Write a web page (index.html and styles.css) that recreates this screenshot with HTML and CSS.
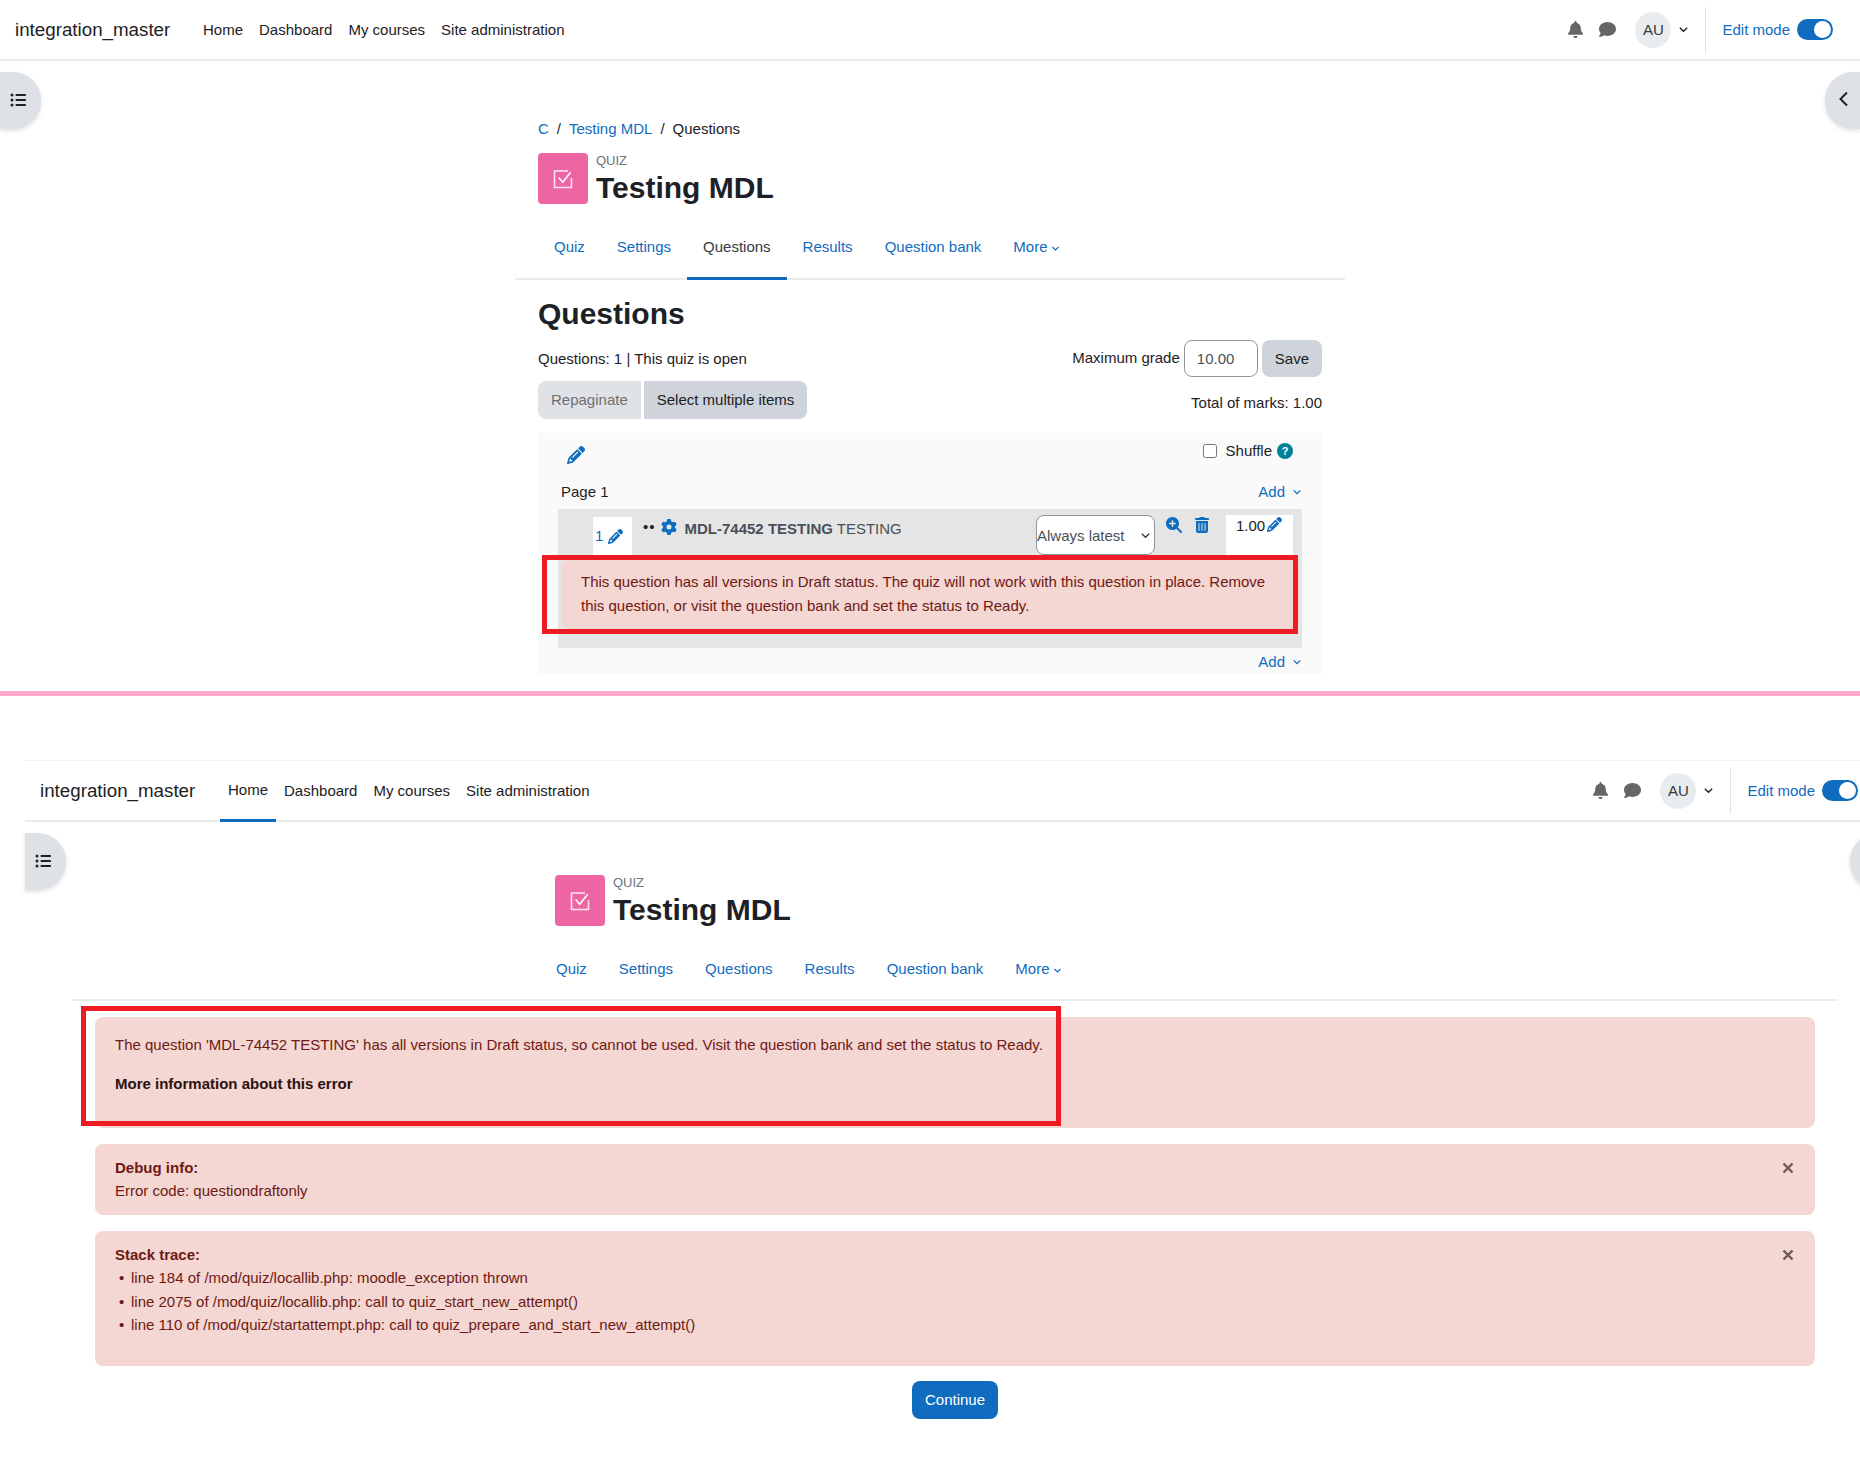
FILE: index.html
```html
<!DOCTYPE html>
<html lang="en">
<head>
  <meta charset="UTF-8" />
  <title>Testing MDL</title>
  <link rel="stylesheet" href="styles.css">
</head>
<body>
  <svg class="sprite" xmlns="http://www.w3.org/2000/svg">
    <symbol id="i-bell" viewBox="0 0 448 512"><path d="M224 0c-17.7 0-32 14.3-32 32V51.2C119 66 64 130.6 64 208v18.8c0 47-17.3 92.4-48.5 127.6l-7.4 8.3c-8.4 9.4-10.4 22.9-5.3 34.4S19.4 416 32 416H416c12.6 0 24-7.4 29.2-18.9s3.1-25-5.3-34.4l-7.4-8.3C401.3 319.2 384 273.9 384 226.8V208c0-77.4-55-142-128-156.8V32c0-17.7-14.3-32-32-32zm45.3 493.3c12-12 18.7-28.3 18.7-45.3H224 160c0 17 6.7 33.3 18.7 45.3s28.3 18.7 45.3 18.7s33.3-6.7 45.3-18.7z"/></symbol>
    <symbol id="i-comment" viewBox="0 0 512 512"><path d="M512 240c0 114.9-114.6 208-256 208c-37.1 0-72.3-6.4-104.1-17.9c-11.9 8.7-31.3 20.6-54.3 30.6C73.6 471.1 44.7 480 16 480c-6.5 0-12.3-3.9-14.8-9.9c-2.5-6-1.1-12.8 3.4-17.4l.3-.3c.3-.3 .7-.7 1.3-1.4c1.1-1.2 2.8-3.1 4.9-5.7c4.1-5 9.6-12.4 15.2-21.6c10-16.6 19.5-38.4 21.4-62.9C17.7 326.8 0 285.1 0 240C0 125.1 114.6 32 256 32s256 93.1 256 208z"/></symbol>
    <symbol id="i-pen" viewBox="0 0 512 512"><path d="M410.3 231l11.3-11.3-33.9-33.9-62.1-62.1L291.7 89.8l-11.3 11.3-22.6 22.6L58.6 322.9c-10.4 10.4-18 23.3-22.2 37.4L1 480.7c-2.5 8.4-.2 17.5 6.1 23.7s15.3 8.5 23.7 6.1l120.3-35.4c14.1-4.2 27-11.8 37.4-22.2L387.7 253.7 410.3 231zM160 399.4l-9.1 22.7c-4 3.1-8.5 5.4-13.3 6.9L59.4 452l23-78.1c1.4-4.9 3.8-9.4 6.9-13.3l22.7-9.1v32c0 8.8 7.2 16 16 16h32zM362.7 18.7L348.3 33.2 325.7 55.8 314.3 67.1l33.9 33.9 62.1 62.1 33.9 33.9 11.3-11.3 22.6-22.6 14.5-14.5c25-25 25-65.5 0-90.5L453.3 18.7c-25-25-65.5-25-90.5 0zm-47.4 168l-144 144c-6.2 6.2-16.4 6.2-22.6 0s-6.2-16.4 0-22.6l144-144c6.2-6.2 16.4-6.2 22.6 0s6.2 16.4 0 22.6z"/></symbol>
    <symbol id="i-gear" viewBox="0 0 512 512"><path d="M495.9 166.6c3.2 8.7 .5 18.4-6.4 24.6l-43.3 39.4c1.1 8.3 1.7 16.8 1.7 25.4s-.6 17.1-1.7 25.4l43.3 39.4c6.9 6.2 9.6 15.9 6.4 24.6c-4.4 11.9-9.7 23.3-15.8 34.3l-4.7 8.1c-6.6 11-14 21.4-22.1 31.2c-5.9 7.2-15.7 9.6-24.5 6.8l-55.7-17.7c-13.4 10.3-28.2 18.9-44 25.4l-12.5 57.1c-2 9.1-9 16.3-18.2 17.8c-13.8 2.3-28 3.5-42.5 3.5s-28.7-1.2-42.5-3.5c-9.2-1.5-16.2-8.7-18.2-17.8l-12.5-57.1c-15.8-6.5-30.6-15.1-44-25.4L83.1 425.9c-8.8 2.8-18.6 .3-24.5-6.8c-8.1-9.8-15.5-20.2-22.1-31.2l-4.7-8.1c-6.1-11-11.4-22.4-15.8-34.3c-3.2-8.7-.5-18.4 6.4-24.6l43.3-39.4C64.6 273.1 64 264.6 64 256s.6-17.1 1.7-25.4L22.4 191.2c-6.9-6.2-9.6-15.9-6.4-24.6c4.4-11.9 9.7-23.3 15.8-34.3l4.7-8.1c6.6-11 14-21.4 22.1-31.2c5.9-7.2 15.7-9.6 24.5-6.8l55.7 17.7c13.4-10.3 28.2-18.9 44-25.4l12.5-57.1c2-9.1 9-16.3 18.2-17.8C227.3 1.2 241.5 0 256 0s28.7 1.2 42.5 3.5c9.2 1.5 16.2 8.7 18.2 17.8l12.5 57.1c15.8 6.5 30.6 15.1 44 25.4l55.7-17.7c8.8-2.8 18.6-.3 24.5 6.8c8.1 9.8 15.5 20.2 22.1 31.2l4.7 8.1c6.1 11 11.4 22.4 15.8 34.3zM256 336a80 80 0 1 0 0-160 80 80 0 1 0 0 160z"/></symbol>
    <symbol id="i-zoom" viewBox="0 0 512 512"><path d="M416 208c0 45.9-14.9 88.3-40 122.7L502.6 457.4c12.5 12.5 12.5 32.8 0 45.3s-32.8 12.5-45.3 0L330.7 376c-34.4 25.2-76.8 40-122.7 40C93.1 416 0 322.9 0 208S93.1 0 208 0S416 93.1 416 208zM184 296c0 13.3 10.7 24 24 24s24-10.7 24-24V232h64c13.3 0 24-10.7 24-24s-10.7-24-24-24H232V120c0-13.3-10.7-24-24-24s-24 10.7-24 24v64H120c-13.3 0-24 10.7-24 24s10.7 24 24 24h64v64z"/></symbol>
    <symbol id="i-trash" viewBox="0 0 448 512"><path d="M135.2 17.7C140.6 6.8 151.7 0 163.8 0H284.2c12.1 0 23.2 6.8 28.6 17.7L320 32h96c17.7 0 32 14.3 32 32s-14.3 32-32 32H32C14.3 96 0 81.7 0 64S14.3 32 32 32h96l7.2-14.3zM32 128H416V448c0 35.3-28.7 64-64 64H96c-35.3 0-64-28.7-64-64V128zm96 64c-8.8 0-16 7.2-16 16V432c0 8.8 7.2 16 16 16s16-7.2 16-16V208c0-8.8-7.2-16-16-16zm96 0c-8.8 0-16 7.2-16 16V432c0 8.8 7.2 16 16 16s16-7.2 16-16V208c0-8.8-7.2-16-16-16zm96 0c-8.8 0-16 7.2-16 16V432c0 8.8 7.2 16 16 16s16-7.2 16-16V208c0-8.8-7.2-16-16-16z"/></symbol>
    <symbol id="i-list" viewBox="0 0 16 16"><circle cx="2" cy="3" r="1.5"/><circle cx="2" cy="8" r="1.5"/><circle cx="2" cy="13" r="1.5"/><rect x="5.5" y="2" width="10.5" height="2" rx=".8"/><rect x="5.5" y="7" width="10.5" height="2" rx=".8"/><rect x="5.5" y="12" width="10.5" height="2" rx=".8"/></symbol>
    <symbol id="i-quiz" viewBox="0 0 24 24"><path d="M17 4H3.5v16.5h17V11" fill="none" stroke="currentColor" stroke-opacity=".85" stroke-width="1.5" stroke-linejoin="round"/><path d="M7.7 10.5l4 4.7 8-10" fill="none" stroke="currentColor" stroke-width="1.6"/></symbol>
    <symbol id="i-down" viewBox="0 0 12 12"><path d="M2 4l4 4 4-4" fill="none" stroke="currentColor" stroke-width="1.5"/></symbol>
    <symbol id="i-close" viewBox="0 0 12 12"><path d="M1.5 1.5l9 9M10.5 1.5l-9 9" fill="none" stroke="currentColor" stroke-width="2.4"/></symbol>
  </svg>

  <!-- first capture: quiz questions page -->
  <section class="frame frame-questions">
    <nav class="navbar">
      <a class="brand">integration_master</a>
      <ul class="nav-links">
        <li><a>Home</a></li>
        <li><a>Dashboard</a></li>
        <li><a>My courses</a></li>
        <li><a>Site administration</a></li>
      </ul>
      <div class="user-nav">
        <svg class="nav-icon bell"><use href="#i-bell"/></svg>
        <svg class="nav-icon comment"><use href="#i-comment"/></svg>
        <span class="avatar">AU</span>
        <svg class="caret"><use href="#i-down"/></svg>
        <span class="nav-divider"></span>
        <a class="edit-label">Edit mode</a>
        <span class="toggle"></span>
      </div>
    </nav>
    <button class="drawer-toggle drawer-left"><svg><use href="#i-list"/></svg></button>
    <button class="drawer-toggle drawer-right"><svg viewBox="0 0 12 16"><path d="M9 1.5L2.5 8 9 14.5" fill="none" stroke="currentColor" stroke-width="2"/></svg></button>

    <main class="quiz-main">
      <ol class="breadcrumb">
        <li><a>C</a></li>
        <li class="sep">/</li>
        <li><a>Testing MDL</a></li>
        <li class="sep">/</li>
        <li>Questions</li>
      </ol>
      <header class="page-head">
        <span class="quiz-icon"><svg><use href="#i-quiz"/></svg></span>
        <div>
          <div class="page-type">QUIZ</div>
          <h1>Testing MDL</h1>
        </div>
      </header>
      <ul class="tabs">
        <li><a>Quiz</a></li>
        <li><a>Settings</a></li>
        <li class="active"><a>Questions</a></li>
        <li><a>Results</a></li>
        <li><a>Question bank</a></li>
        <li><a>More <svg class="more-caret"><use href="#i-down"/></svg></a></li>
      </ul>

      <h2>Questions</h2>
      <div class="info-row">
        <span>Questions: 1 | This quiz is open</span>
        <form class="grade-form">
          <label for="maxgrade">Maximum grade</label>
          <input id="maxgrade" type="text" value="10.00" />
          <button type="button" class="btn btn-grey">Save</button>
        </form>
      </div>
      <div class="action-row">
        <div class="btn-pair">
          <button type="button" class="btn btn-grey is-disabled">Repaginate</button>
          <button type="button" class="btn btn-grey">Select multiple items</button>
        </div>
        <span class="total-marks">Total of marks: 1.00</span>
      </div>

      <div class="slots">
        <div class="slots-head">
          <svg class="pen pen-lg"><use href="#i-pen"/></svg>
          <label class="shuffle"><input type="checkbox" /> Shuffle <span class="help">?</span></label>
        </div>
        <div class="page-row">
          <span>Page 1</span>
          <a class="add-link">Add <svg><use href="#i-down"/></svg></a>
        </div>
        <div class="slot">
          <div class="slot-line">
            <span class="slot-num"><a>1</a><svg class="pen"><use href="#i-pen"/></svg></span>
            <span class="dots">••</span>
            <svg class="gear"><use href="#i-gear"/></svg>
            <span class="slot-title"><b>MDL-74452 TESTING</b> TESTING</span>
            <select class="version"><option>Always latest</option></select>
            <svg class="slot-icon zoom"><use href="#i-zoom"/></svg>
            <svg class="slot-icon trash"><use href="#i-trash"/></svg>
            <span class="slot-mark">1.00<svg class="pen"><use href="#i-pen"/></svg></span>
          </div>
          <div class="alert slot-alert">This question has all versions in Draft status. The quiz will not work with this question in place. Remove this question, or visit the question bank and set the status to Ready.</div>
          <span class="marker marker-slot"></span>
        </div>
        <div class="page-row page-row-end">
          <a class="add-link">Add <svg><use href="#i-down"/></svg></a>
        </div>
      </div>
    </main>
  </section>

  <div class="divider"></div>

  <!-- second capture: error page -->
  <section class="frame frame-error">
    <nav class="navbar">
      <a class="brand">integration_master</a>
      <ul class="nav-links">
        <li class="active"><a>Home</a></li>
        <li><a>Dashboard</a></li>
        <li><a>My courses</a></li>
        <li><a>Site administration</a></li>
      </ul>
      <div class="user-nav">
        <svg class="nav-icon bell"><use href="#i-bell"/></svg>
        <svg class="nav-icon comment"><use href="#i-comment"/></svg>
        <span class="avatar">AU</span>
        <svg class="caret"><use href="#i-down"/></svg>
        <span class="nav-divider"></span>
        <a class="edit-label">Edit mode</a>
        <span class="toggle"></span>
      </div>
    </nav>
    <button class="drawer-toggle drawer-left"><svg><use href="#i-list"/></svg></button>
    <button class="drawer-toggle drawer-right"></button>

    <main class="error-main">
      <header class="page-head">
        <span class="quiz-icon"><svg><use href="#i-quiz"/></svg></span>
        <div>
          <div class="page-type">QUIZ</div>
          <h1>Testing MDL</h1>
        </div>
      </header>
      <ul class="tabs">
        <li><a>Quiz</a></li>
        <li><a>Settings</a></li>
        <li><a>Questions</a></li>
        <li><a>Results</a></li>
        <li><a>Question bank</a></li>
        <li><a>More <svg class="more-caret"><use href="#i-down"/></svg></a></li>
      </ul>

      <div class="alerts">
        <div class="alert alert-main">
          <p>The question 'MDL-74452 TESTING' has all versions in Draft status, so cannot be used. Visit the question bank and set the status to Ready.</p>
          <a class="more-info">More information about this error</a>
          <span class="marker marker-error"></span>
        </div>
        <div class="alert alert-debug">
          <div>
            <b>Debug info:</b><br>
            Error code: questiondraftonly
          </div>
          <svg class="close"><use href="#i-close"/></svg>
        </div>
        <div class="alert alert-debug alert-stack">
          <div>
            <b>Stack trace:</b>
            <ul>
              <li>line 184 of /mod/quiz/locallib.php: moodle_exception thrown</li>
              <li>line 2075 of /mod/quiz/locallib.php: call to quiz_start_new_attempt()</li>
              <li>line 110 of /mod/quiz/startattempt.php: call to quiz_prepare_and_start_new_attempt()</li>
            </ul>
          </div>
          <svg class="close"><use href="#i-close"/></svg>
        </div>
      </div>
      <div class="continue-row"><button type="button" class="btn btn-primary">Continue</button></div>
    </main>
  </section>
</body>
</html>
```

FILE: styles.css
```css
* {
  margin: 0;
  padding: 0;
  box-sizing: border-box;
  font-family: "Liberation Sans", Arial, sans-serif;
}

html, body {
  width: 1860px;
  height: 1464px;
  overflow: hidden;
}

body {
  background: #fff;
  color: #1d2125;
  font-size: 15px;
  line-height: 22px;
}

a {
  color: #0f6cbf;
}

ul, ol {
  list-style: none;
}

.sprite {
  position: absolute;
  width: 0;
  height: 0;
}

svg {
  fill: currentColor;
  display: block;
}

.frame {
  position: relative;
  width: 1860px;
  overflow: hidden;
}

.frame-questions {
  height: 691px;
}

.frame-error {
  margin-top: 64px;
  margin-left: 25px;
  height: 704px;
  border-top: 1px solid #f2f3f5;
  overflow: visible;
}

.divider {
  height: 5px;
  background: #ffa8c9;
}

/* top bar */
.navbar {
  display: flex;
  align-items: center;
  height: 61px;
  padding-left: 15px;
  border-bottom: 2px solid #e9ecef;
}

.brand {
  width: 180px;
  font-size: 18.75px;
  color: #1d2125;
}

.nav-links {
  display: flex;
  align-self: stretch;
}

.nav-links li {
  display: flex;
  align-items: center;
  padding: 0 8px 1px;
  margin-bottom: -2px;
}

.nav-links a {
  color: #1d2125;
}

.nav-links .active {
  padding-bottom: 0;
  border-bottom: 3px solid #0f6cbf;
}

.user-nav {
  display: flex;
  align-items: center;
  margin-left: auto;
  padding-right: 27px;
  color: #1d2125;
}

.nav-icon {
  color: #666;
}

.bell {
  width: 15px;
  height: 17px;
}

.comment {
  width: 17px;
  height: 17px;
  margin-left: 16px;
}

.avatar {
  display: flex;
  align-items: center;
  justify-content: center;
  width: 36px;
  height: 36px;
  margin-left: 19px;
  border-radius: 50%;
  background: #e9ecef;
  color: #343a40;
}

.caret {
  width: 11px;
  height: 11px;
  margin-left: 7px;
}

.nav-divider {
  width: 1px;
  height: 46px;
  margin: 0 16px;
  background: #dee2e6;
}

.edit-label {
  margin-right: 7px;
}

.toggle {
  position: relative;
  width: 36px;
  height: 21px;
  border-radius: 11px;
  background: #0f6cbf;
}

.toggle::after {
  content: "";
  position: absolute;
  top: 2px;
  right: 2px;
  width: 17px;
  height: 17px;
  border-radius: 50%;
  background: #fff;
}

.drawer-toggle {
  position: absolute;
  top: 72px;
  width: 41px;
  height: 57px;
  border: none;
  background: #dee2e6;
  color: #1d2125;
  box-shadow: 0 2px 4px rgba(0, 0, 0, 0.12);
  display: flex;
  align-items: center;
}

.drawer-left {
  left: 0;
  border-radius: 0 28px 28px 0;
  padding-left: 10px;
}

.drawer-left svg {
  width: 16px;
  height: 16px;
  margin-top: -2px;
}

.drawer-right {
  right: 0;
  width: 35px;
  border-radius: 28px 0 0 28px;
  padding-left: 13px;
}

.drawer-right svg {
  width: 12px;
  height: 16px;
  margin-top: -3px;
}

.frame-error .drawer-right {
  right: auto;
  left: 1825px;
}

/* page header */
.quiz-main {
  width: 784px;
  margin: 0 auto;
  padding-top: 57px;
}

.breadcrumb {
  display: flex;
  gap: 8px;
  height: 22px;
  margin-bottom: 13px;
}

.page-head {
  display: flex;
  gap: 8px;
  height: 53px;
}

.quiz-icon {
  display: flex;
  align-items: center;
  justify-content: center;
  width: 50px;
  height: 51px;
  border-radius: 4px;
  background: #ed65a3;
  color: #fff;
}

.quiz-icon svg {
  width: 24px;
  height: 24px;
}

.page-type {
  height: 16px;
  font-size: 13px;
  line-height: 16px;
  color: #6a737b;
}

h1 {
  margin-top: 1px;
  font-size: 30px;
  line-height: 36px;
}

.tabs {
  display: flex;
  height: 60px;
  margin: 14px -23px 0;
  padding-left: 23px;
  border-bottom: 2px solid #e9ecef;
}

.tabs li {
  height: 60px;
  padding: 16px 16px 0;
  border-bottom: 3px solid transparent;
}

.tabs a {
  display: flex;
  align-items: center;
  gap: 3px;
}

.tabs .active {
  border-bottom-color: #0f6cbf;
}

.tabs .active a {
  color: #343a40;
}

.more-caret {
  width: 9px;
  height: 9px;
  margin-top: 2px;
}

h2 {
  margin-top: 16px;
  font-size: 30px;
  line-height: 36px;
}

.info-row, .action-row {
  display: flex;
  justify-content: space-between;
  align-items: center;
}

.info-row {
  height: 37px;
  margin-top: 8px;
}

.grade-form {
  display: flex;
  align-items: center;
}

.grade-form label {
  margin: -2px 4px 0 0;
}

.grade-form input {
  width: 74px;
  height: 37px;
  padding-left: 12px;
  border: 1px solid #8f959e;
  border-radius: 8px;
  font-size: 15px;
  color: #495057;
}

.btn {
  height: 37px;
  padding: 0 13px;
  border: none;
  border-radius: 8px;
  font-size: 15px;
  color: #1d2125;
}

.btn-grey {
  background: #ced4da;
}

.grade-form .btn {
  margin-left: 4px;
}

.action-row {
  margin-top: 4px;
  height: 38px;
}

.btn-pair {
  display: flex;
  gap: 3px;
}

.btn-pair .btn {
  height: 38px;
  padding-bottom: 2px;
}

.btn-pair .btn:first-child {
  border-radius: 8px 0 0 8px;
}

.btn-pair .btn:last-child {
  border-radius: 0 8px 8px 0;
}

.is-disabled {
  opacity: 0.65;
}

.total-marks {
  margin-top: 5px;
}

/* question list */
.slots {
  height: 241px;
  margin-top: 14px;
  padding: 0 20px;
  background: #fafafa;
}

.slots-head {
  display: flex;
  justify-content: space-between;
  height: 48px;
  padding: 13px 9px 0 9px;
}

.pen {
  width: 15px;
  height: 15px;
  color: #0f6cbf;
}

.pen-lg {
  width: 18px;
  height: 18px;
}

.shuffle {
  display: flex;
  align-items: center;
  height: 22px;
  gap: 9px;
  margin-top: -6px;
}

.shuffle input {
  width: 14px;
  height: 14px;
}

.help {
  display: flex;
  align-items: center;
  justify-content: center;
  width: 16px;
  height: 16px;
  margin-left: -4px;
  border-radius: 50%;
  background: #008196;
  color: #fff;
  font-size: 11px;
  font-weight: bold;
}

.page-row {
  display: flex;
  justify-content: space-between;
  align-items: center;
  height: 22px;
  margin-bottom: 6px;
  padding-left: 3px;
}

.page-row-end {
  justify-content: flex-end;
  margin-top: 3px;
}

.add-link {
  display: flex;
  align-items: center;
  gap: 7px;
}

.add-link svg {
  width: 10px;
  height: 10px;
}

.slot {
  position: relative;
  height: 139px;
  background: #e5e5e5;
}

.slot-line {
  display: flex;
  align-items: flex-start;
  height: 46px;
  padding: 6px 9px 0 35px;
}

.slot-num {
  display: flex;
  align-items: center;
  gap: 5px;
  width: 39px;
  height: 38px;
  margin-top: 2px;
  padding-left: 2px;
  background: #fff;
}

.dots {
  margin-left: 11px;
  margin-top: 1px;
  font-size: 15px;
  line-height: 22px;
  letter-spacing: 1px;
  color: #1d2125;
}

.gear {
  width: 16px;
  height: 16px;
  margin: 4px 0 0 5px;
  color: #0f6cbf;
}

.slot-title {
  margin-left: 8px;
  margin-top: 3px;
  color: #495057;
}

.version {
  appearance: none;
  width: 119px;
  height: 40px;
  margin-left: auto;
  padding-left: 0;
  border: 1px solid #8f959e;
  border-radius: 8px;
  background: #fff url("data:image/svg+xml,%3Csvg xmlns='http://www.w3.org/2000/svg' viewBox='0 0 12 12'%3E%3Cpath d='M2 4l4 4 4-4' fill='none' stroke='%23343a40' stroke-width='1.5'/%3E%3C/svg%3E") no-repeat right 3px center / 11px;
  font-size: 15px;
  color: #495057;
}

.slot-icon {
  color: #0f6cbf;
}

.zoom {
  width: 16px;
  height: 16px;
  margin: 2px 0 0 11px;
}

.trash {
  width: 14px;
  height: 16px;
  margin: 2px 0 0 13px;
}

.slot-mark {
  display: flex;
  width: 67px;
  height: 40px;
  margin-left: 17px;
  padding: 0 0 0 10px;
  background: #fff;
}

.slot-mark .pen {
  margin: 2px 0 0 2px;
}

.alert {
  background: #f4d6d2;
  color: #6e1a13;
  line-height: 23.5px;
  border-radius: 8px;
}

.slot-alert {
  width: 738px;
  height: 69px;
  margin: 5px 0 0 3px;
  padding: 10px 20px;
}

/* red review markers drawn over the captures */
.marker {
  position: absolute;
  border: 5px solid #ed1c24;
}

.marker-slot {
  left: -16px;
  top: 46px;
  width: 756px;
  height: 79px;
}

/* error page */
.error-main {
  width: 1720px;
  margin: 0 auto;
  padding-top: 53px;
}

.error-main .page-head {
  margin-left: 460px;
}

.error-main .tabs {
  margin: 13px -23px 0;
  padding-left: 468px;
}

.error-main .tabs li {
  padding-top: 17px;
}

.alerts {
  margin-top: 16px;
}

.alert-main {
  position: relative;
  height: 111px;
  padding: 16px 20px 0;
}

.alert-main p {
  margin-bottom: 15.5px;
}

.more-info {
  display: block;
  font-weight: bold;
  color: #2b1310;
}

.marker-error {
  left: -14px;
  top: -11px;
  width: 980px;
  height: 120px;
}

.alert-debug {
  display: flex;
  justify-content: space-between;
  height: 71px;
  margin-top: 16px;
  padding: 12px 21px 0 20px;
  line-height: 23.4px;
}

.alert-stack {
  height: 135px;
}

.alert-stack ul {
  padding-left: 16px;
}

.alert-stack li::before {
  content: "•";
  display: inline-block;
  width: 12px;
  margin-left: -12px;
}

.close {
  width: 12px;
  height: 12px;
  margin-top: 6px;
  color: #6c5a58;
}

.continue-row {
  display: flex;
  justify-content: center;
  margin-top: 15px;
}

.btn-primary {
  height: 38px;
  padding: 0 13px 2px;
  background: #0f6cbf;
  color: #fff;
}
```
